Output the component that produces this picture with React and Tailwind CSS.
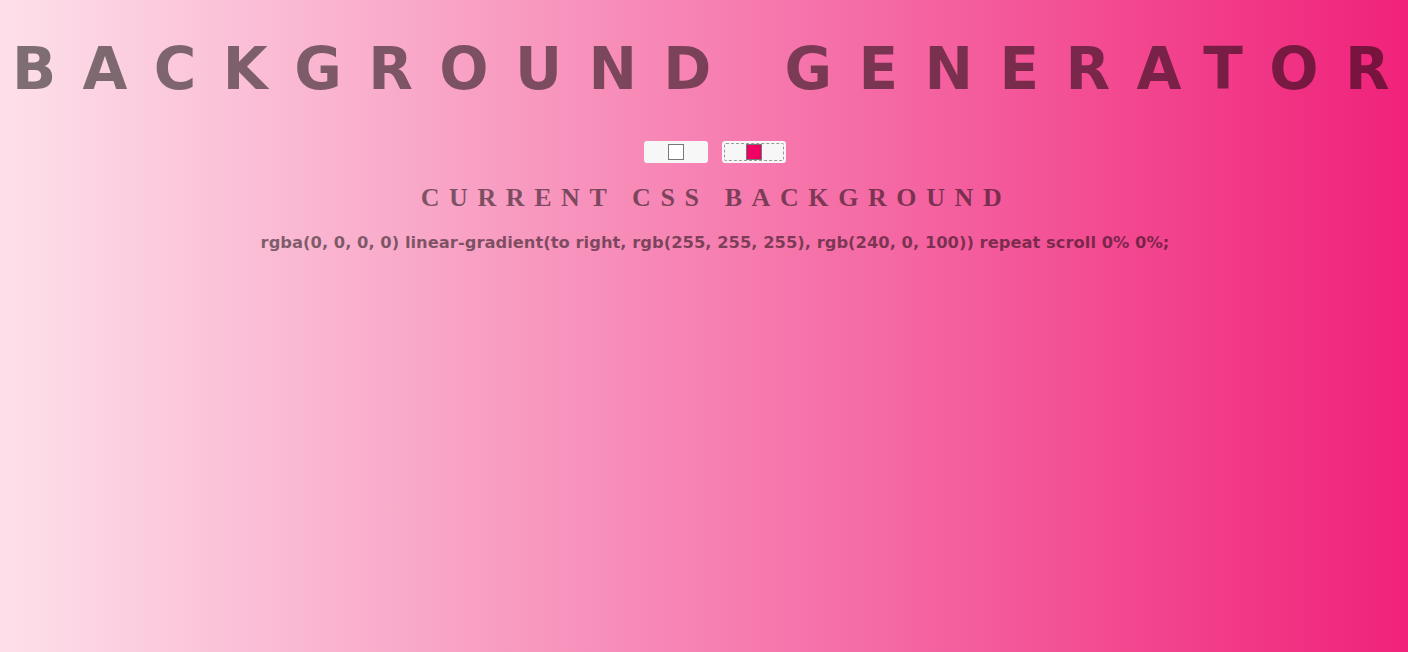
import React, { useState } from "react";

const ColorSwatch = ({ color, focused }) => (
  <div className="w-16 h-[22px] rounded-[3px] bg-[#f7f7f7] flex items-center justify-center p-[2px]">
    <div
      className={
        focused
          ? "w-full h-full rounded-[2px] border border-dashed border-[#9a9a9a] flex items-center justify-center"
          : "w-full h-full flex items-center justify-center"
      }
    >
      <div className="w-4 h-4 border border-[#777]" style={{ background: color }} />
    </div>
  </div>
);

export default function App() {
  const [color1] = useState("#ffffff");
  const [color2] = useState("#f00064");

  return (
    <div className="min-h-[652px] w-full overflow-hidden bg-[linear-gradient(to_right,#fde0ea,#f0227a)] flex flex-col items-center text-center text-black/50">
      {/* Title */}
      <h1 className="pt-[40px] pr-[6.4px] font-['DejaVu_Sans',sans-serif] font-bold text-[58px] leading-none tracking-[26.4px] whitespace-nowrap">
        BACKGROUND GENERATO<span className="tracking-normal">R</span>
      </h1>

      {/* Color inputs */}
      <div className="mt-[43px] pl-[22px] flex gap-[14px]">
        <ColorSwatch color={color1} />
        <ColorSwatch color={color2} focused />
      </div>

      {/* Current background */}
      <h3 className="mt-[22px] pl-[24px] font-['Liberation_Serif',serif] font-bold text-[26px] leading-none tracking-[9.6px]">
        CURRENT CSS BACKGROUND
      </h3>
      <p className="mt-[24px] pl-[22px] font-['DejaVu_Sans',sans-serif] font-bold text-[16.35px] leading-none whitespace-nowrap">
        rgba(0, 0, 0, 0) linear-gradient(to right, rgb(255, 255, 255), rgb(240, 0, 100)) repeat scroll 0% 0%;
      </p>
    </div>
  );
}
